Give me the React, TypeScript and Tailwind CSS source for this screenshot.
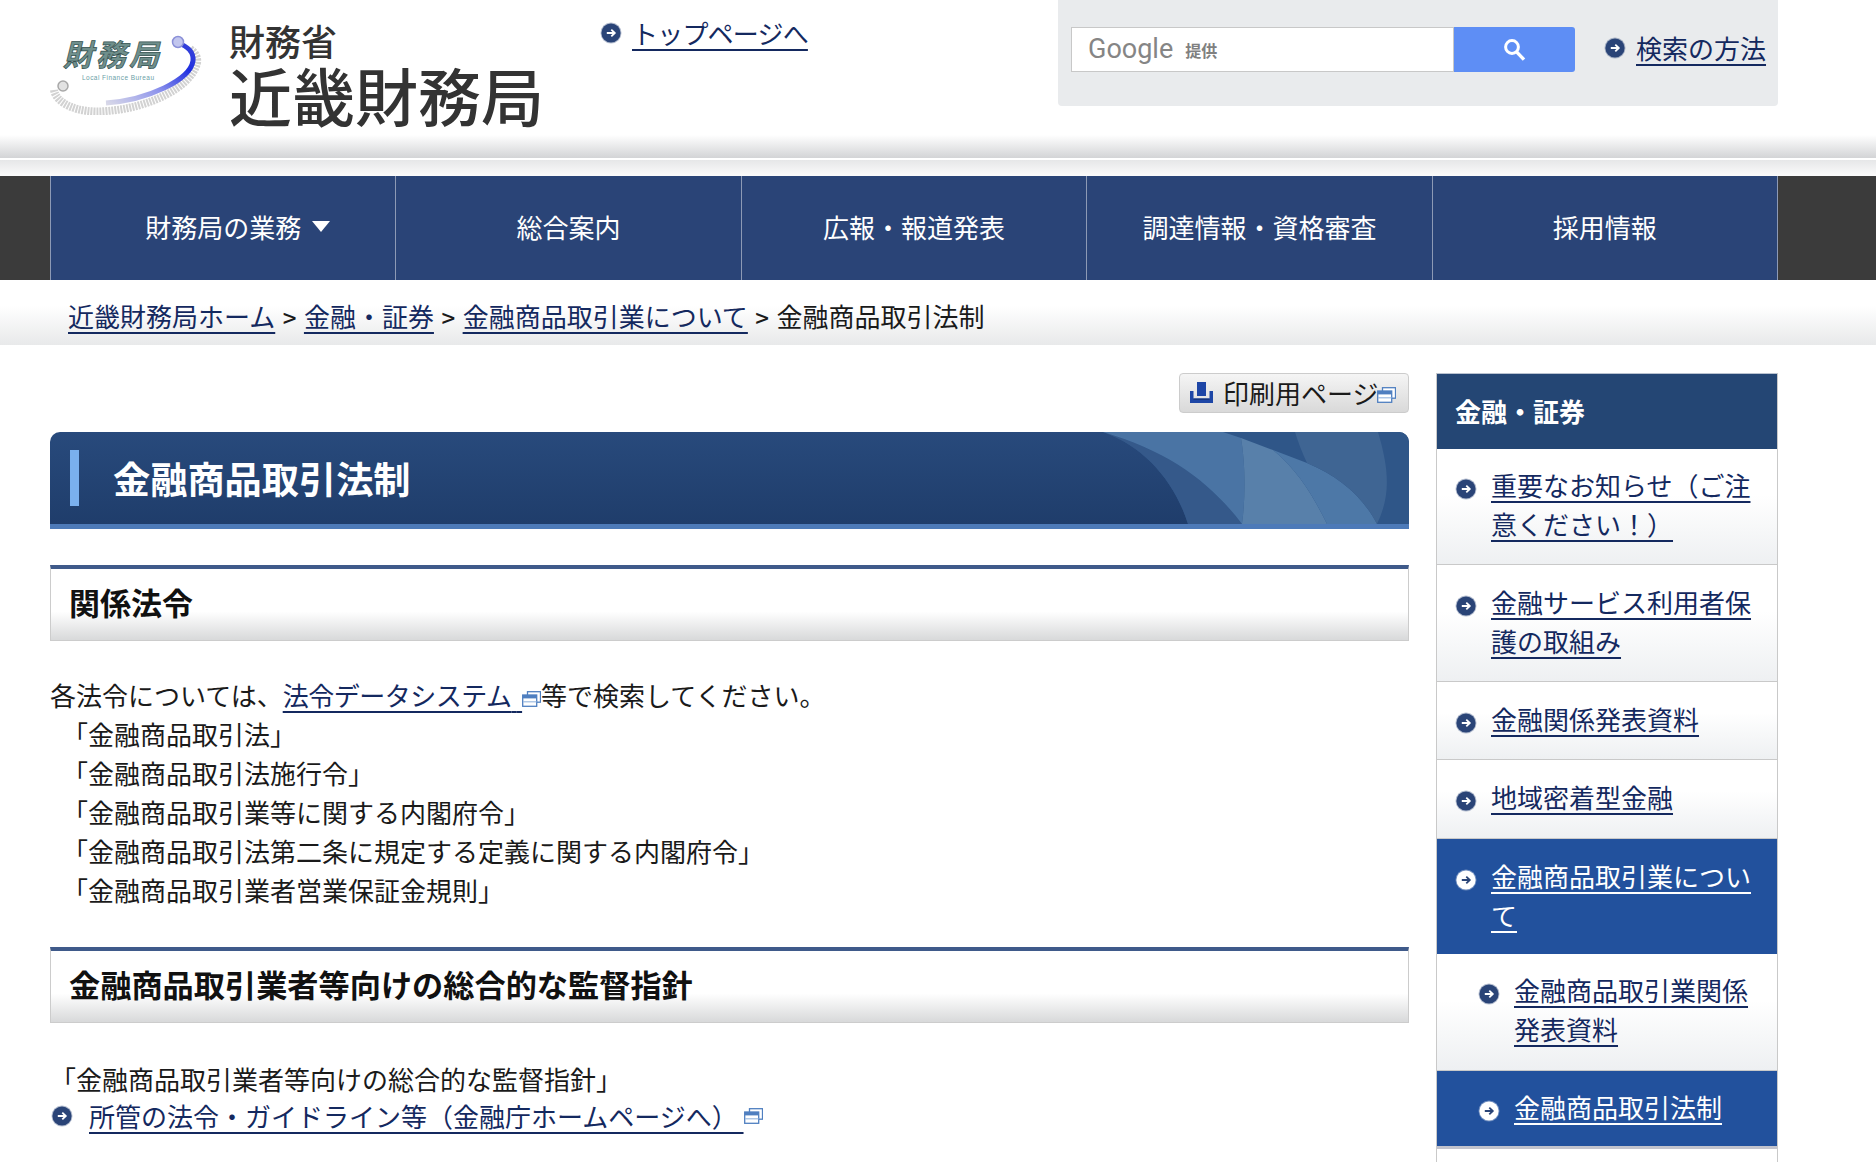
const linkClass = 'text-[#14295f] underline decoration-2 underline-offset-[5px]';
const lightLinkClass = 'text-white underline decoration-2 underline-offset-[5px]';

function ArrowIcon({ light = false, className = '' }: { light?: boolean; className?: string }) {
  return (
    <svg viewBox="0 0 22 22" className={`h-[22px] w-[22px] shrink-0 ${className}`}>
      <circle cx="11" cy="11" r="10.5" fill={light ? '#ffffff' : '#2a4477'} opacity="0.35" />
      <circle cx="11" cy="11" r="9.6" fill={light ? '#ffffff' : '#2a4477'} />
      <path
        d="M6.8 11h8M11.3 7.6l3.5 3.4-3.5 3.4"
        fill="none"
        stroke={light ? '#2a4477' : '#ffffff'}
        strokeWidth="1.8"
      />
    </svg>
  );
}

function WindowIcon({ className = '' }: { className?: string }) {
  return (
    <svg viewBox="0 0 19 16" className={`inline-block h-[16px] w-[19px] ${className}`}>
      <rect x="5.5" y="0.7" width="13" height="10.5" fill="#ffffff" stroke="#4f7fc0" strokeWidth="1.3" />
      <rect x="0.7" y="4" width="14" height="11.3" fill="#ffffff" stroke="#4f7fc0" strokeWidth="1.3" />
      <rect x="0.7" y="4" width="14" height="3.4" fill="#4f7fc0" />
      <path d="M1 10.8h13.5" stroke="#9dbbe0" strokeWidth="1.2" />
    </svg>
  );
}

function PrintIcon() {
  return (
    <svg viewBox="0 0 23 21" className="h-[21px] w-[23px] shrink-0">
      <path d="M0 9h3.5v7.5h16V9H23v12H0z" fill="#1d46a6" />
      <path d="M7 0h9v14H7z" fill="#1d46a6" />
      <path d="M3.5 16.5h16v1.5h-16z" fill="#16367f" />
    </svg>
  );
}

function SearchGlyph() {
  return (
    <svg viewBox="0 0 23 23" className="h-[23px] w-[23px]">
      <circle cx="9" cy="9" r="6.4" fill="none" stroke="#ffffff" strokeWidth="3" />
      <path d="M13.6 13.8 21 21.6" fill="none" stroke="#ffffff" strokeWidth="3.4" />
    </svg>
  );
}

function Logo() {
  return (
    <svg viewBox="0 0 152 85" className="h-[85px] w-[152px] shrink-0">
      <defs>
        <linearGradient id="ring" x1="0" y1="1" x2="1" y2="0">
          <stop offset="0" stopColor="#d8d8e8" />
          <stop offset="0.4" stopColor="#8f95ec" />
          <stop offset="0.75" stopColor="#1f2fe0" />
          <stop offset="1" stopColor="#3a45d8" />
        </linearGradient>
      </defs>
      <path
        d="M4 60C6 73 27 84 57 81 98 78 141 58 147 33 148 27 145 22 140 19"
        fill="none"
        stroke="#d2d2d2"
        strokeWidth="8"
        strokeDasharray="2 1"
      />
      <path d="M56 73C98 70 140 50 143 31 144 22 137 16 128 13" fill="none" stroke="url(#ring)" strokeWidth="5" />
      <circle cx="128" cy="12" r="5.5" fill="#c2c6ee" stroke="#8b90d8" strokeWidth="1.5" />
      <circle cx="13" cy="56" r="5" fill="#e2e2e2" stroke="#a8a8a8" strokeWidth="1.5" />
      <text
        x="13"
        y="36"
        fill="#6f8f8c"
        stroke="#33504f"
        strokeWidth="0.7"
        fontFamily="'Noto Sans CJK JP', sans-serif"
        fontSize="30"
        fontWeight="700"
        fontStyle="italic"
        textLength="96"
      >
        財務局
      </text>
      <text x="32" y="50" fill="#6aa0a6" fontFamily="'Liberation Sans', sans-serif" fontSize="6.5" textLength="72">
        Local Finance Bureau
      </text>
    </svg>
  );
}

function BannerArt() {
  return (
    <svg viewBox="0 0 349 92" preserveAspectRatio="none" className="absolute right-0 top-0 h-[92px] w-[349px]">
      <path d="M43 0H349V92H128C115 50 85 15 43 0Z" fill="#2f5688" />
      <path d="M43 0C85 15 115 50 128 92H182C150 50 110 20 43 0Z" fill="#35598a" />
      <path d="M43 0H163L181 6C185 30 186 62 182 92 150 50 110 20 43 0Z" fill="#4a74a4" />
      <path d="M181 6 213 18C240 40 255 68 267 92H182C186 62 185 30 181 6Z" fill="#5880aa" />
      <path d="M213 18 247 31C280 45 303 65 317 92H267C255 68 240 40 213 18Z" fill="#4d78a7" />
      <path d="M235 0H318C330 40 330 65 317 92 303 65 280 45 247 31 242 20 238 10 235 0Z" fill="#3f6593" />
    </svg>
  );
}

const sideItems = [
  { text: '重要なお知らせ（ご注意ください！）', box: 'pt-[16px] pb-[21px]' },
  { text: '金融サービス利用者保護の取組み', box: 'pt-[17px] pb-[21px]' },
  { text: '金融関係発表資料', box: 'pt-[17px] pb-[21px]' },
  { text: '地域密着型金融', box: 'pt-[17px] pb-[22px]' },
];

function SideRow({ text, box, sub = false, active = false }: { text: string; box: string; sub?: boolean; active?: boolean }) {
  return (
    <div
      className={`flex items-start ${box} ${sub ? 'pl-[41px] pr-[20px]' : 'pl-[18px] pr-[16px]'} ${
        active ? 'bg-[#22519d]' : 'border-b border-[#c9c9c9] bg-gradient-to-b from-white from-40% to-[#eef0f2]'
      }`}
    >
      <ArrowIcon light={active} className="mt-[13px] mr-[14px]" />
      <a className={active ? lightLinkClass : linkClass}>{text}</a>
    </div>
  );
}

export default function App() {
  const laws = [
    '「金融商品取引法」',
    '「金融商品取引法施行令」',
    '「金融商品取引業等に関する内閣府令」',
    '「金融商品取引法第二条に規定する定義に関する内閣府令」',
    '「金融商品取引業者営業保証金規則」',
  ];
  const navItems = ['財務局の業務', '総合案内', '広報・報道発表', '調達情報・資格審査', '採用情報'];

  return (
    <div className="h-[1162px] overflow-hidden bg-white text-[26px] leading-[39px] text-[#1a1a1a] font-['Noto_Sans_CJK_JP',sans-serif]">
      <header className="flex h-[135px] pl-[50px] pr-[98px]">
        <div className="mt-[30px]">
          <Logo />
        </div>
        <div className="ml-[27px] flex w-[371px] flex-col font-medium text-[#333333]">
          <span className="mt-[20px] text-[36px] leading-[40px]">財務省</span>
          <span className="mt-[1px] whitespace-nowrap text-[63px] leading-[66px]">近畿財務局</span>
        </div>
        <div className="mt-[13px] flex h-[39px] items-center">
          <ArrowIcon className="mr-[10px]" />
          <a className={`${linkClass} tracking-[-0.8px]`}>トップページへ</a>
        </div>
        <div className="ml-auto flex h-[106px] w-[720px] rounded-b bg-[#e9ebed] pl-[13px] pt-[27px]">
          <div className="flex h-[45px] w-[383px] items-center border border-[#c8c8c8] bg-white pl-[16px]">
            <span className="font-['Roboto',sans-serif] text-[27px] leading-none text-[#858585]">Google</span>
            <span className="ml-[12px] text-[16px] font-bold leading-none text-[#808080]">提供</span>
          </div>
          <div className="flex h-[45px] w-[121px] items-center justify-center rounded-r-[3px] bg-[#5e8ef5]">
            <SearchGlyph />
          </div>
          <div className="ml-[29px] flex h-[45px] items-center pb-[4px]">
            <ArrowIcon className="mr-[10px]" />
            <a className={linkClass}>検索の方法</a>
          </div>
        </div>
      </header>

      <div className="h-[23px] bg-gradient-to-b from-white to-[#d3d4d6]" />
      <div className="h-[18px] border-t-2 border-white bg-gradient-to-b from-[#e6e7e8] to-[#fbfbfb]" />

      <nav className="flex h-[104px] bg-[#3b3b3b] pl-[50px]">
        <div className="flex w-[1728px] border-l border-[#8d9ab5] bg-[#2a4477] text-white">
          {navItems.map((item, i) => (
            <div key={item} className="flex flex-1 items-center justify-center border-r border-[#8d9ab5] pb-[3px]">
              {item}
              {i === 0 && (
                <span className="ml-[11px] mr-[-29px] h-0 w-0 border-x-[9px] border-t-[11px] border-x-transparent border-t-white" />
              )}
            </div>
          ))}
        </div>
      </nav>
      <div className="h-[65px] bg-gradient-to-b from-white from-40% to-[#e8e9ea] pl-[68px] pt-[16px]">
        <a className={linkClass}>近畿財務局ホーム</a>
        <span className="mx-[7.5px] text-[24px] font-medium">&gt;</span>
        <a className={linkClass}>金融・証券</a>
        <span className="mx-[7.5px] text-[24px] font-medium">&gt;</span>
        <a className={linkClass}>金融商品取引業について</a>
        <span className="mx-[7.5px] text-[24px] font-medium">&gt;</span>
        金融商品取引法制
      </div>

      <div className="flex pl-[50px] pr-[98px] pt-[28px]">
        <main className="w-[1359px]">
          <div className="flex justify-end">
            <div className="flex h-[40px] w-[230px] items-center rounded-[4px] border border-[#cccccc] bg-gradient-to-b from-[#f5f5f5] to-[#d9d9d9] pb-[2px] pl-[10px]">
              <PrintIcon />
              <span className="ml-[10px] whitespace-nowrap">印刷用ページ</span>
              <WindowIcon className="ml-[-1px] mt-[6px] shrink-0" />
            </div>
          </div>

          <div className="relative mt-[19px] h-[97px] overflow-hidden rounded-t-[10px] border-b-[5px] border-[#4d7ab8] bg-gradient-to-b from-[#284a7c] to-[#1f3d6b]">
            <BannerArt />
            <div className="relative flex h-[92px] items-center pl-[20px]">
              <span className="h-[56px] w-[9px] bg-[#7ab0ee]" />
              <h1 className="ml-[34px] pt-[2px] text-[37.2px] font-bold leading-none text-white">金融商品取引法制</h1>
            </div>
          </div>

          <h2 className="mt-[36px] flex h-[76px] items-center border border-t-4 border-[#cccccc] border-t-[#3f5a8a] bg-gradient-to-b from-white from-60% to-[#d8d9da] pb-[6px] pl-[18px] text-[31px] font-bold text-[#111111]">
            関係法令
          </h2>
          <div className="mt-[34px]">
            <p>
              各法令については、
              <a className={`${linkClass} tracking-[-0.5px]`}>法令データシステム{' '}&nbsp;</a>
              <WindowIcon />
              等で検索してください。
            </p>
            {laws.map((law) => (
              <p key={law} className="pl-[12px]">
                {law}
              </p>
            ))}
          </div>

          <h2 className="mt-[38px] flex h-[76px] items-center border border-t-4 border-[#cccccc] border-t-[#3f5a8a] bg-gradient-to-b from-white from-60% to-[#d8d9da] pb-[7px] pl-[18px] text-[31.2px] font-bold text-[#111111]">
            金融商品取引業者等向けの総合的な監督指針
          </h2>
          <p className="mt-[36px]">「金融商品取引業者等向けの総合的な監督指針」</p>
          <div className="-mt-[2px] flex items-center">
            <ArrowIcon className="mr-[16px] ml-[1px]" />
            <a className={linkClass}>所管の法令・ガイドライン等（金融庁ホームページへ）&nbsp;</a>
            <WindowIcon />
          </div>
        </main>

        <aside className="ml-[27px] w-[342px] border-x border-[#c9c9c9]">
          <div className="flex h-[76px] items-center border-t border-[#b9c2d0] bg-[#244674] pb-[3px] pl-[18px] font-bold text-white">
            金融・証券
          </div>
          {sideItems.map((item) => (
            <SideRow key={item.text} text={item.text} box={item.box} />
          ))}
          <SideRow text="金融商品取引業について" box="pt-[17px] pb-[20px]" active />
          <SideRow text="金融商品取引業関係発表資料" box="pt-[16px] pb-[22px]" sub />
          <SideRow text="金融商品取引法制" box="pt-[16px] pb-[20px]" sub active />
          <div className="h-[40px] border-t-[3px] border-[#c2c3cd] bg-white" />
        </aside>
      </div>
    </div>
  );
}
